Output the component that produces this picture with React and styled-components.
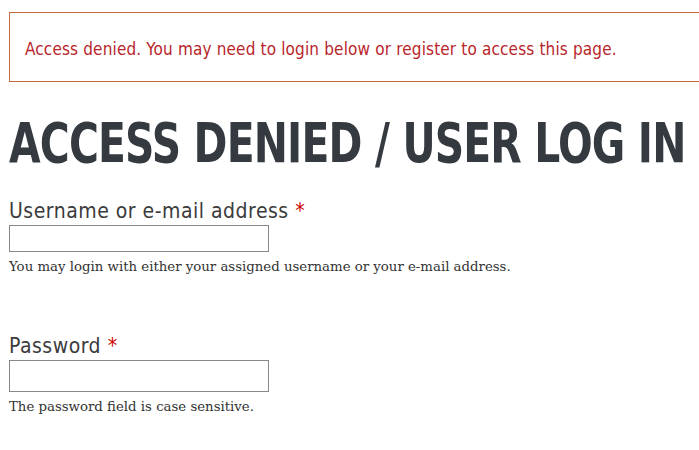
import styled, { createGlobalStyle } from 'styled-components'

const GlobalStyle = createGlobalStyle`
  html, body {
    margin: 0;
    padding: 0;
    background: #fff;
    overflow: hidden;
  }
`

export default function App() {
  return (
    <>
      <GlobalStyle />
      <Page>
        <Message>
          Access denied. You may need to login below or register to access this page.
        </Message>
        <Title>Access denied / User log in</Title>
        <Form>
          <Field>
            <Label htmlFor="name">
              Username or e-mail address <Required>*</Required>
            </Label>
            <Input id="name" type="text" />
            <Help>You may login with either your assigned username or your e-mail address.</Help>
          </Field>
          <Field>
            <Label htmlFor="pass">
              Password <Required>*</Required>
            </Label>
            <Input id="pass" type="password" tall />
            <Help>The password field is case sensitive.</Help>
          </Field>
        </Form>
      </Page>
    </>
  )
}

const Page = styled.div`
  padding: 12px 0 0 9px;
  font-family: "DejaVu Sans Condensed", "DejaVu Sans", sans-serif;
`

const Message = styled.div`
  box-sizing: border-box;
  height: 70px;
  margin-right: -20px;
  border: 1px solid #c4673f;
  padding: 3px 15px 0;
  display: flex;
  align-items: center;
  color: #b8262b;
  font-size: 17px;
  letter-spacing: 0.15px;
`

const Title = styled.h1`
  display: inline-block;
  margin: 31px 0 0;
  color: #343a40;
  font-size: 55px;
  line-height: 60px;
  font-weight: 700;
  letter-spacing: -1px;
  text-transform: uppercase;
  white-space: nowrap;
  transform: scaleX(0.825);
  transform-origin: left center;
`

const Form = styled.form`
  margin-top: 25px;
  display: flex;
  flex-direction: column;
  gap: 56px;
`

const Field = styled.div`
  display: flex;
  flex-direction: column;
  align-items: flex-start;
`

const Label = styled.label`
  color: #3b3b3b;
  font-size: 21px;
  line-height: 26px;
  letter-spacing: 0.5px;
`

const Required = styled.span`
  color: #c00;
`

const Input = styled.input`
  box-sizing: border-box;
  width: 260px;
  height: ${p => (p.tall ? '32px' : '27px')};
  margin: 1px 0 0;
  border: 1px solid #888;
  background: #fff;
`

const Help = styled.div`
  margin-top: 5px;
  color: #333;
  font-family: "DejaVu Serif", "Liberation Serif", serif;
  font-size: 13.3px;
  line-height: 20px;
`
